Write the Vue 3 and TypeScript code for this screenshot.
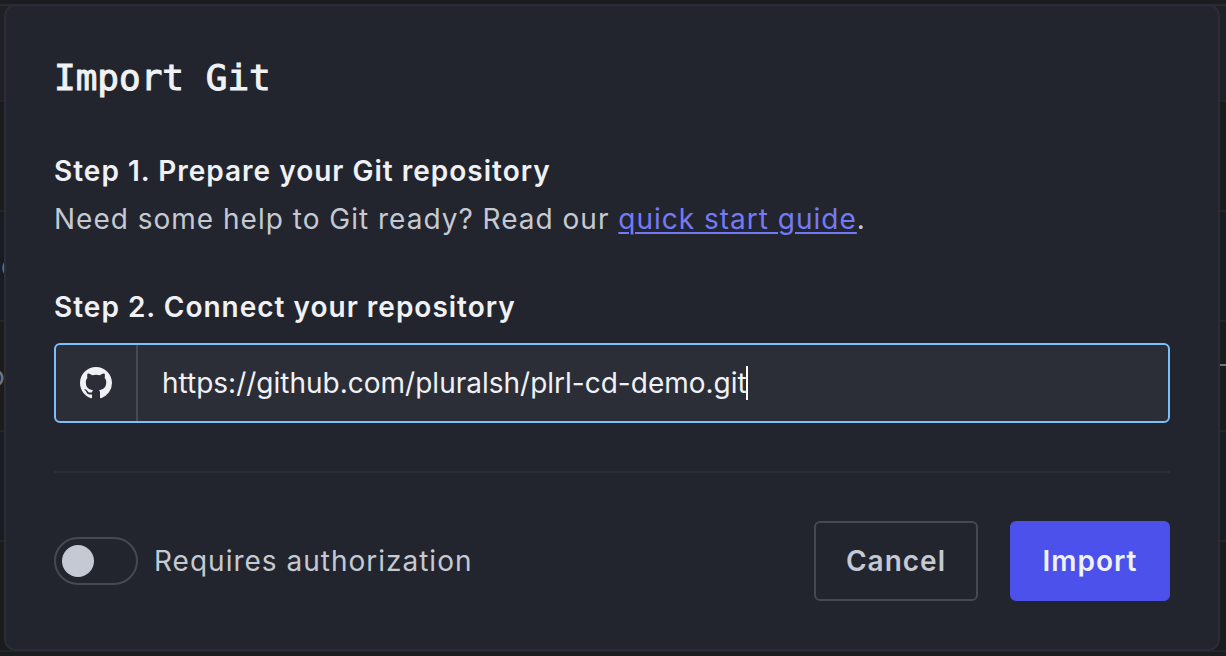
<script setup lang="ts">
import { ref } from 'vue'

interface BackdropRow {
  id: number
  start: string
  marked: boolean
}

const repositoryUrl = ref<string>('https://github.com/pluralsh/plrl-cd-demo.git')
const requiresAuth = ref<boolean>(false)

const rows: BackdropRow[] = [
  { id: 0, start: '', marked: false },
  { id: 1, start: '', marked: false },
  { id: 2, start: 'c', marked: false },
  { id: 3, start: 'o', marked: true },
  { id: 4, start: '', marked: false },
  { id: 5, start: '', marked: false },
]
</script>

<template>
  <div class="page">
    <div class="backdrop" aria-hidden="true">
      <div v-for="row in rows" :key="row.id" class="row">
        <span class="start">{{ row.start }}</span>
        <span v-if="row.marked" class="mark"></span>
      </div>
    </div>

    <form class="modal" role="dialog" aria-labelledby="title" @submit.prevent>
      <h1 id="title">Import Git</h1>

      <section class="step">
        <h2>Step 1. Prepare your Git repository</h2>
        <p>Need some help to Git ready? Read our <a href="#guide">quick start guide</a>.</p>
      </section>

      <section class="step">
        <h2><label for="repo">Step 2. Connect your repository</label></h2>
        <div class="field">
          <span class="prefix">
            <svg viewBox="0 0 16 16" width="32" height="32" aria-hidden="true">
              <path
                fill="currentColor"
                fill-rule="evenodd"
                d="M8 0C3.58 0 0 3.58 0 8c0 3.54 2.29 6.53 5.47 7.59.4.07.55-.17.55-.38 0-.19-.01-.82-.01-1.49-2.01.37-2.53-.49-2.69-.94-.09-.23-.48-.94-.82-1.13-.28-.15-.68-.52-.01-.53.63-.01 1.08.58 1.23.82.72 1.21 1.87.87 2.33.66.07-.52.28-.87.51-1.07-1.78-.2-3.64-.89-3.64-3.95 0-.87.31-1.59.82-2.15-.08-.2-.36-1.02.08-2.12 0 0 .67-.21 2.2.82.64-.18 1.32-.27 2-.27s1.36.09 2 .27c1.53-1.04 2.2-.82 2.2-.82.44 1.1.16 1.92.08 2.12.51.56.82 1.27.82 2.15 0 3.07-1.87 3.75-3.65 3.95.29.25.54.73.54 1.48 0 1.07-.01 1.93-.01 2.2 0 .21.15.46.55.38A8.01 8.01 0 0 0 16 8c0-4.42-3.58-8-8-8z"
              />
            </svg>
          </span>
          <div class="entry">
            <input id="repo" v-model="repositoryUrl" type="text" spellcheck="false" />
            <span class="caret" aria-hidden="true"></span>
          </div>
        </div>
      </section>

      <hr />

      <footer>
        <label class="toggle">
          <input v-model="requiresAuth" type="checkbox" role="switch" />
          <span>Requires authorization</span>
        </label>
        <div class="actions">
          <button type="button" class="cancel">Cancel</button>
          <button type="submit" class="import">Import</button>
        </div>
      </footer>
    </form>
  </div>
</template>

<style>
body {
  background: #1b1c20;
}
</style>

<style scoped>
* {
  box-sizing: border-box;
}

.page {
  position: relative;
  overflow: hidden;
  min-height: 100vh;
  padding: 4px 6px 5px 4px;
  font-family: Inter, "Liberation Sans", sans-serif;
  font-size: 28px;
  line-height: 48px;
  color: #c5c9d3;
}

.backdrop {
  position: absolute;
  inset: 4px 0 auto;
  border-top: 2px solid #292b32;
}

.row {
  display: flex;
  align-items: center;
  justify-content: space-between;
  height: 110px;
  border-bottom: 2px solid #23242a;
  background: #1b1b1e;
  color: #6f737d;
}

.row:nth-child(odd) {
  background: #1a1c24;
}

.row:first-child {
  height: 96px;
  background: #1f2025;
}

.start {
  margin-left: -12px;
}

.row:nth-child(3) .start {
  margin-left: 1px;
}

.mark {
  width: 6px;
  height: 2px;
  margin-bottom: 22px;
  background: #6f737d;
}

.modal {
  position: relative;
  padding: 48px;
  border: 2px solid #2a2d36;
  border-radius: 12px;
  background: #22252d;
}

h1,
h2,
p {
  margin: 0;
}

h1 {
  font-family: "DejaVu Sans Mono", monospace;
  font-size: 36px;
  font-weight: 400;
  color: #f0f1f4;
  -webkit-text-stroke: 1px #f0f1f4;
}

h2 {
  font-size: 28px;
  font-weight: 600;
  letter-spacing: 1px;
  color: #f0f1f4;
}

p,
.toggle,
button {
  letter-spacing: 1px;
}

.step {
  margin-top: 40px;
}

h1 + .step {
  margin-top: 45px;
}

a {
  color: #747af6;
  text-decoration-thickness: 2px;
  text-underline-offset: 3px;
}

.field {
  display: flex;
  height: 80px;
  margin-top: 12px;
  overflow: hidden;
  border: 2px solid #7bc0f8;
  border-radius: 6px;
  background: #2b2e37;
  color: #f0f1f4;
}

.prefix {
  display: flex;
  align-items: center;
  justify-content: center;
  flex: none;
  width: 82px;
  border-right: 2px solid #454954;
}

.entry {
  display: flex;
  align-items: center;
  flex: 1;
  padding-left: 24px;
}

.entry input {
  field-sizing: content;
  min-width: 0;
  padding: 0;
  border: 0;
  outline: 0;
  background: transparent;
  color: inherit;
  caret-color: transparent;
  font: inherit;
}

.caret {
  width: 2px;
  height: 34px;
  margin-left: -1px;
  background: #ffffff;
}

hr {
  height: 2px;
  margin: 48px 0;
  border: 0;
  background: #2b2e37;
}

footer,
.toggle,
.actions {
  display: flex;
  align-items: center;
}

footer {
  justify-content: space-between;
}

.toggle {
  gap: 16px;
}

.toggle input {
  display: flex;
  align-items: center;
  appearance: none;
  width: 84px;
  height: 48px;
  margin: 0;
  padding: 0 6px;
  border: 2px solid #454954;
  border-radius: 24px;
}

.toggle input::before {
  content: "";
  width: 32px;
  height: 32px;
  border-radius: 50%;
  background: #c5c9d3;
}

.toggle input:checked {
  justify-content: flex-end;
}

.actions {
  gap: 32px;
}

button {
  min-width: 160px;
  height: 80px;
  padding: 0 30px;
  border: 2px solid #454954;
  border-radius: 6px;
  background: transparent;
  color: #c5c9d3;
  font-family: inherit;
  font-size: 28px;
  font-weight: 600;
}

.import {
  border-color: #4b51ea;
  background: #4b51ea;
  color: #f0f1f4;
}
</style>
